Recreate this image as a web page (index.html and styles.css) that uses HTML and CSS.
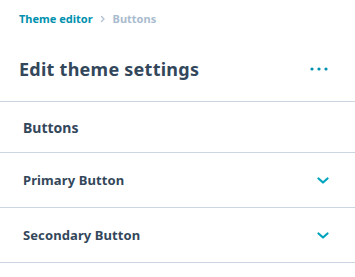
FILE: index.html
```html
<!DOCTYPE html>
<html>
<head>
<meta charset="utf-8">
<link rel="stylesheet" href="styles.css">
</head>
<body>
<div class="panel">
  <nav class="crumbs">
    <span class="crumb-link">Theme editor</span>
    <svg class="crumb-sep" width="6" height="8" viewBox="0 0 6 8"><path d="M1.5 1.5 L4 4 L1.5 6.5" fill="none" stroke="#b0c1d4" stroke-width="1.4" stroke-linecap="round" stroke-linejoin="round"/></svg>
    <span class="crumb-current">Buttons</span>
  </nav>
  <header class="head">
    <h1 class="title">Edit theme settings</h1>
    <svg class="more" width="18" height="4" viewBox="0 0 18 4"><circle cx="2" cy="2" r="1.6" fill="#0091ae"/><circle cx="9" cy="2" r="1.6" fill="#0091ae"/><circle cx="16" cy="2" r="1.6" fill="#0091ae"/></svg>
  </header>
  <div class="section">Buttons</div>
  <div class="row">
    <span class="row-label">Primary Button</span>
    <svg class="chev" width="12" height="7" viewBox="0 0 12 7"><path d="M1.5 1.5 L6 5.5 L10.5 1.5" fill="none" stroke="#00a4bd" stroke-width="2.2" stroke-linecap="round" stroke-linejoin="round"/></svg>
  </div>
  <div class="row">
    <span class="row-label">Secondary Button</span>
    <svg class="chev" width="12" height="7" viewBox="0 0 12 7"><path d="M1.5 1.5 L6 5.5 L10.5 1.5" fill="none" stroke="#00a4bd" stroke-width="2.2" stroke-linecap="round" stroke-linejoin="round"/></svg>
  </div>
</div>
</body>
</html>
```
FILE: styles.css
```css
* { box-sizing: border-box; margin: 0; padding: 0; }
body {
  background: #fff;
  font-family: "Noto Sans", "Liberation Sans", sans-serif;
  color: #33475b;
  width: 355px;
  height: 277px;
  overflow: hidden;
}
.panel { display: flex; flex-direction: column; }
.crumbs {
  display: flex;
  align-items: center;
  gap: 7px;
  height: 37px;
  padding-left: 19px;
  font-size: 11px;
  font-weight: 700;
}
.crumb-link { color: #0091ae; }
.crumb-current { color: #a9bbce; }
.head {
  display: flex;
  align-items: center;
  justify-content: space-between;
  height: 65px;
  padding: 0 27px 0 19px;
  border-bottom: 1px solid #cbd6e2;
}
.title { font-size: 18px; font-weight: 700; color: #33475b; letter-spacing: 0.25px; }
.section {
  height: 51px;
  display: flex;
  align-items: center;
  padding-left: 23px;
  font-size: 14px;
  font-weight: 700;
  border-bottom: 1px solid #cbd6e2;
}
.row {
  height: 55px;
  display: flex;
  align-items: center;
  justify-content: space-between;
  padding: 0 26px 0 23px;
  border-bottom: 1px solid #cbd6e2;
}
.row-label { font-size: 13px; font-weight: 700; letter-spacing: 0.1px; }
.chev { display: block; }
```
